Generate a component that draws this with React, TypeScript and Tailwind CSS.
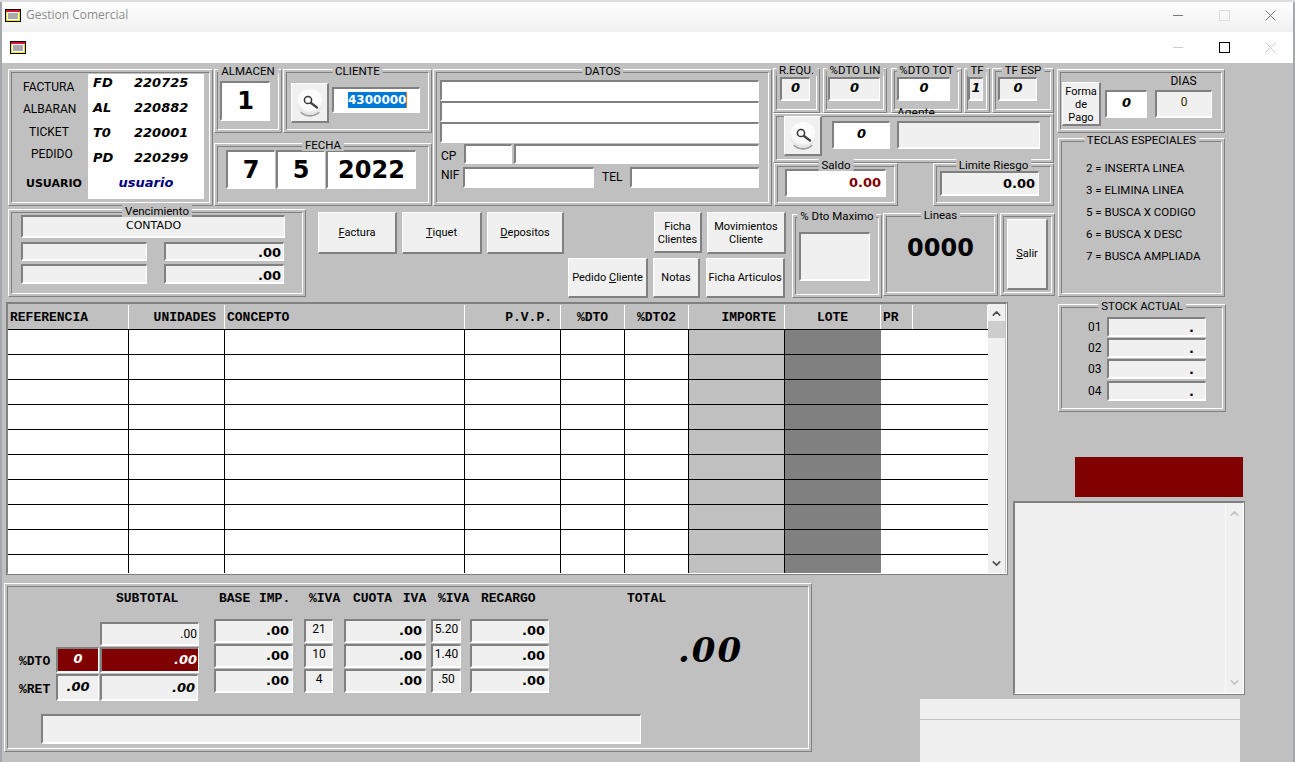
import React from "react";
import { ChevronDown, ChevronUp } from "lucide-react";

const verdana = "font-['DejaVu_Sans',sans-serif]";
const valueBold = `${verdana} font-bold text-[13px]`;
const valueItalic = `${verdana} font-bold italic text-[13px]`;
const bigValue = `${verdana} font-bold text-[24px]`;
const mono = "font-['Liberation_Mono',monospace] font-bold text-[13px] leading-none";

const Group = ({
  title,
  className = "",
  innerClassName = "",
  children,
}: {
  title?: string;
  className?: string;
  innerClassName?: string;
  children?: React.ReactNode;
}) => (
  <div className={`relative shrink-0 border border-t-white border-l-white border-r-[#808080] border-b-[#808080] p-[2px] ${className}`}>
    <div className={`h-full border border-t-[#808080] border-l-[#808080] border-r-white border-b-white ${innerClassName}`}>
      {children}
    </div>
    {title && (
      <span className="absolute top-[-5px] left-1/2 -translate-x-1/2 whitespace-nowrap bg-[#c0c0c0] px-[3px] text-[11.5px] leading-[12px]">
        {title}
      </span>
    )}
  </div>
);

const Field = ({
  className = "",
  children,
}: {
  className?: string;
  children?: React.ReactNode;
}) => (
  <div className={`flex shrink-0 items-center border-t-2 border-l-2 border-r border-b-2 border-t-[#808080] border-l-[#808080] border-r-white border-b-white ${className}`}>
    {children}
  </div>
);

const Button = ({
  className = "",
  children,
}: {
  className?: string;
  children?: React.ReactNode;
}) => (
  <button className={`flex shrink-0 items-center justify-center border border-r-2 border-b-2 border-t-white border-l-white border-r-[#808080] border-b-[#808080] bg-[#f0f0f0] pt-[1px] text-center text-[11px] ${className}`}>
    {children}
  </button>
);

const AppIcon = ({ className = "" }: { className?: string }) => (
  <svg width="16" height="13" viewBox="0 0 16 13" className={className}>
    <rect x="0" y="0" width="16" height="13" fill="#000" />
    <rect x="1" y="1" width="14" height="2" fill="#e01030" />
    <rect x="1" y="3" width="14" height="9" fill="#f0e800" />
    <rect x="2" y="3" width="12" height="8" fill="#fff" />
    <path d="M3 5h10M3 7h10M3 9h10" stroke="#555" strokeWidth="1" />
  </svg>
);

const SearchButton = ({ className = "" }: { className?: string }) => (
  <Button className={className}>
    <svg width="30" height="32" viewBox="0 0 30 32">
      <defs>
        <radialGradient id="knob" cx="50%" cy="35%" r="60%">
          <stop offset="0%" stopColor="#ffffff" />
          <stop offset="75%" stopColor="#fafafa" />
          <stop offset="100%" stopColor="#e2e2e2" />
        </radialGradient>
      </defs>
      <path d="M6 25c4 5 14 5 18 0" stroke="#9a9a9a" strokeWidth="2" fill="none" />
      <circle cx="15" cy="15" r="13" fill="url(#knob)" />
      <circle cx="13" cy="13" r="3.6" fill="#fff" stroke="#333" strokeWidth="1.5" />
      <path d="M16 16l6 4.5" stroke="#444" strokeWidth="2.2" strokeLinecap="round" />
    </svg>
  </Button>
);

const WindowGlyphs = ({ inner }: { inner?: boolean }) => (
  <div className="flex">
    <div className="flex h-[16px] w-[46px] items-center justify-center">
      <div className={`h-px w-[10px] ${inner ? "bg-[#cccccc]" : "bg-[#777777]"}`} />
    </div>
    <div className="flex h-[16px] w-[46px] items-center justify-center">
      <div className={`h-[11px] w-[11px] border ${inner ? "border-black" : "border-[#dddddd]"}`} />
    </div>
    <div className="flex h-[16px] w-[46px] items-center justify-center">
      <svg width="11" height="11" viewBox="0 0 11 11">
        <path d="M0.5 0.5l10 10M10.5 0.5l-10 10" stroke={inner ? "#cccccc" : "#777777"} strokeWidth="1" />
      </svg>
    </div>
  </div>
);

const headers = [
  { text: "REFERENCIA", cls: "w-[121px] pl-[2px]" },
  { text: "UNIDADES", cls: "w-[96px] justify-end pr-[8px]" },
  { text: "CONCEPTO", cls: "w-[240px] pl-[2px]" },
  { text: "P.V.P.", cls: "w-[96px] justify-end pr-[8px]" },
  { text: "%DTO", cls: "w-[64px] justify-center" },
  { text: "%DTO2", cls: "w-[64px] justify-center" },
  { text: "IMPORTE", cls: "w-[96px] justify-end pr-[8px]" },
  { text: "LOTE", cls: "w-[96px] justify-center" },
  { text: "PR", cls: "w-[32px] pl-[2px]" },
  { text: "", cls: "w-[75px]" },
];

const rows = Array.from({ length: 10 }, (_, i) => i);

const Grid = () => (
  <div className="ml-[2px] h-[273px] w-[1002px] border border-[#808080]">
    <div className="flex h-full border border-t-[#808080] border-l-[#808080] border-r-white border-b-white">
      <div className="w-[980px] shrink-0">
        <div className="flex h-[26px] border-b border-b-black bg-[#c0c0c0] pt-[1px]">
          {headers.map((h) => (
            <div key={h.text} className={`flex shrink-0 items-center border-r border-r-white ${mono} ${h.cls}`}>
              {h.text}
            </div>
          ))}
        </div>
        <div className="h-[243px] overflow-hidden">
          {rows.map((r) => (
            <div key={r} className="grid h-[25px] grid-cols-[121px_96px_240px_96px_64px_64px_96px_96px_107px] border-b border-b-black bg-white">
              <div className="border-r border-r-black" />
              <div className="border-r border-r-black" />
              <div className="border-r border-r-black" />
              <div className="border-r border-r-black" />
              <div className="border-r border-r-black" />
              <div className="border-r border-r-black" />
              <div className="border-r border-r-black bg-[#c0c0c0]" />
              <div className="bg-[#808080]" />
              <div />
            </div>
          ))}
        </div>
      </div>
      <div className="flex w-[17px] shrink-0 flex-col items-center bg-[#f0f0f0]">
        <ChevronUp size={13} strokeWidth={3} color="#505050" className="mt-[3px] shrink-0" />
        <div className="mt-[1px] h-[17px] w-full bg-[#cdcdcd]" />
        <ChevronDown size={13} strokeWidth={3} color="#505050" className="mt-auto mb-[3px] shrink-0" />
      </div>
    </div>
  </div>
);

const TotalColumn = ({
  title,
  titleClass,
  width,
  fieldWidth,
  values,
  thin,
}: {
  title: string;
  titleClass: string;
  width: string;
  fieldWidth: string;
  values: string[];
  thin?: boolean;
}) => (
  <div className={`shrink-0 ${width}`}>
    <div className={`h-[12px] whitespace-nowrap ${mono} ${titleClass}`}>{title}</div>
    <div className="mt-[15px] flex flex-col gap-[1px]">
      {values.map((v, i) => (
        <Field
          key={i}
          className={`h-[24px] bg-[#f0f0f0] ${fieldWidth} ${thin ? "justify-center pb-[4px] text-[12px]" : `justify-end pr-[3px] ${valueBold}`}`}
        >
          {v}
        </Field>
      ))}
    </div>
  </div>
);

const Totals = () => (
  <Group className="mt-[8px] h-[169px] w-[808px]">
    <div className="flex h-[127px] pt-[5px]">
      <div className="ml-[11px] w-[37px] shrink-0 pt-[63px]">
        <div className={`${mono} text-[12px]`}>%DTO</div>
        <div className={`mt-[15px] ${mono} text-[12px]`}>%RET</div>
      </div>
      <div className="mt-[55px] w-[44px] shrink-0">
        <Field className={`h-[26px] w-[43px] justify-center bg-[#800000] pb-[3px] text-white ${valueItalic}`}>0</Field>
        <Field className={`mt-[1px] h-[27px] w-[43px] justify-center bg-[#f0f0f0] pb-[2px] ${valueItalic}`}>.00</Field>
      </div>
      <div className="w-[114px] shrink-0">
        <div className={`ml-[16px] h-[12px] ${mono}`}>SUBTOTAL</div>
        <Field className="mt-[18px] h-[24px] w-[99px] justify-end bg-[#f0f0f0] pr-[1px] text-[12px]">.00</Field>
        <Field className={`mt-[1px] h-[26px] w-[99px] justify-end bg-[#800000] pr-[1px] text-white ${valueItalic}`}>.00</Field>
        <Field className={`mt-[1px] h-[27px] w-[98px] justify-end bg-[#f0f0f0] pr-[2px] ${valueItalic}`}>.00</Field>
      </div>
      <TotalColumn title="BASE IMP." titleClass="ml-[5px] [word-spacing:1px]" width="w-[90px]" fieldWidth="w-[79px]" values={[".00", ".00", ".00"]} />
      <TotalColumn title="%IVA" titleClass="ml-[5px]" width="w-[40px]" fieldWidth="w-[29px]" thin values={["21", "10", "4"]} />
      <TotalColumn title="CUOTA IVA" titleClass="ml-[9px] [word-spacing:3px]" width="w-[87px]" fieldWidth="w-[82px]" values={[".00", ".00", ".00"]} />
      <TotalColumn title="%IVA" titleClass="ml-[7px]" width="w-[39px]" fieldWidth="w-[30px]" thin values={["5.20", "1.40", ".50"]} />
      <TotalColumn title="RECARGO" titleClass="ml-[11px]" width="w-[79px]" fieldWidth="w-[79px]" values={[".00", ".00", ".00"]} />
      <div className="ml-[78px] shrink-0">
        <div className={`h-[12px] ${mono}`}>TOTAL</div>
        <div className="mt-[26px] ml-[51px] font-['DejaVu_Serif',serif] text-[34px] leading-[40px] font-bold tracking-[2px] italic">.00</div>
      </div>
    </div>
    <Field className="ml-[33px] h-[30px] w-[600px] bg-[#f0f0f0]" />
  </Group>
);

const Row = ({ label, mt }: { label: string; mt: string }) => (
  <div className={`flex items-center ${mt}`}>
    <span className="ml-[26px] w-[19px] text-[12px]">{label}</span>
    <Field className={`h-[20px] w-[99px] items-end justify-end bg-[#f0f0f0] pr-[11px] leading-[14px] ${valueBold}`}>.</Field>
  </div>
);

const FacturaBox = () => {
  const nums = [
    ["FD", "220725"],
    ["AL", "220882"],
    ["T0", "220001"],
    ["PD", "220299"],
  ];
  return (
    <Group className="h-[137px] w-[205px]" innerClassName="flex">
      <div className="w-[76px] shrink-0 pt-[8px] text-[12px] leading-[12px]">
        <div className="ml-[11px]">FACTURA</div>
        <div className="mt-[10px] ml-[11px]">ALBARAN</div>
        <div className="mt-[11px] ml-[17px]">TICKET</div>
        <div className="mt-[10px] ml-[19px]">PEDIDO</div>
        <div className={`mt-[18px] ml-[14px] text-[11px] font-bold ${verdana}`}>USUARIO</div>
      </div>
      <div className="mt-px flex h-[125px] w-[116px] shrink-0 flex-col gap-[7px] bg-white">
        {nums.map(([a, b]) => (
          <div key={a} className={`flex h-[18px] items-center pl-[5px] ${valueItalic}`}>
            <span className="w-[41px]">{a}</span>
            <span>{b}</span>
          </div>
        ))}
        <div className={`flex h-[18px] items-center justify-center text-[#000080] ${valueItalic}`}>usuario</div>
      </div>
    </Group>
  );
};

const MiddleBoxes = () => (
  <div className="ml-px w-[218px] shrink-0">
    <div className="flex">
      <Group title="ALMACEN" className="h-[64px] w-[68px]">
        <Field className={`mt-[8px] ml-[2px] h-[40px] w-[50px] justify-center bg-white ${bigValue}`}>1</Field>
      </Group>
      <Group title="CLIENTE" className="ml-px h-[64px] w-[149px]" innerClassName="flex items-start">
        <SearchButton className="mt-[10px] ml-[4px] h-[40px] w-[38px]" />
        <Field className="mt-[14px] ml-[3px] h-[26px] w-[88px] bg-white pl-[14px]">
          <span className={`h-[16px] border-r border-r-[#e07020] bg-[#0078d7] text-[12px] leading-[16px] font-bold text-white ${verdana}`}>4300000</span>
        </Field>
      </Group>
    </div>
    <Group title="FECHA" className="mt-[10px] h-[63px] w-[218px]" innerClassName="flex items-start gap-px pt-[3px] pl-[8px]">
      <Field className={`h-[39px] w-[49px] justify-center bg-white ${bigValue}`}>7</Field>
      <Field className={`h-[39px] w-[49px] justify-center bg-white ${bigValue}`}>5</Field>
      <Field className={`h-[39px] w-[90px] justify-center bg-white ${bigValue}`}>2022</Field>
    </Group>
  </div>
);

const DatosBox = () => (
  <Group title="DATOS" className="ml-px h-[137px] w-[339px]" innerClassName="pt-[7px] pl-[3px] text-[12px]">
    <Field className="h-[21px] w-[319px] bg-white" />
    <Field className="h-[21px] w-[319px] bg-white" />
    <Field className="h-[21px] w-[319px] bg-white" />
    <div className="flex items-center">
      <span className="ml-[1px] w-[23px] pt-[4px]">CP</span>
      <Field className="h-[20px] w-[48px] bg-white" />
      <Field className="ml-[2px] h-[20px] w-[245px] bg-white" />
    </div>
    <div className="mt-[1px] flex items-center">
      <span className="ml-[1px] w-[22px] pb-[5px]">NIF</span>
      <Field className="h-[21px] w-[131px] bg-white" />
      <span className="ml-[8px] w-[28px] pb-[2px]">TEL</span>
      <Field className="h-[21px] w-[129px] bg-white" />
    </div>
  </Group>
);

const smallValue = `justify-center pb-[2px] ${valueItalic}`;

const RightBoxes = () => (
  <div className="-mt-px ml-px w-[282px] shrink-0">
    <div className="flex h-[45px]">
      <Group title="R.EQU." className="h-[45px] w-[47px]">
        <Field className={`mt-[5px] ml-[3px] h-[24px] w-[30px] bg-[#f0f0f0] ${smallValue}`}>0</Field>
      </Group>
      <Group title="%DTO LIN" className="ml-[3px] h-[45px] w-[64px]">
        <Field className={`mt-[5px] ml-[1px] h-[24px] w-[52px] bg-[#f0f0f0] ${smallValue}`}>0</Field>
      </Group>
      <Group title="%DTO TOT" className="ml-[4px] h-[45px] w-[71px]">
        <Field className={`mt-[5px] ml-[2px] h-[24px] w-[53px] bg-white ${smallValue}`}>0</Field>
      </Group>
      <Group title="TF" className="ml-[2px] h-[45px] w-[26px]">
        <Field className={`mt-[5px] h-[24px] w-[15px] bg-[#f0f0f0] ${smallValue}`}>1</Field>
      </Group>
      <Group title="TF ESP" className="ml-[2px] h-[45px] w-[62px]">
        <Field className={`mt-[5px] ml-[2px] h-[24px] w-[39px] bg-[#f0f0f0] ${smallValue}`}>0</Field>
      </Group>
    </div>
    <Group className="h-[50px] w-[281px]" innerClassName="flex items-start">
      <SearchButton className="-mt-[1px] ml-[7px] h-[40px] w-[38px]" />
      <Field className={`mt-[4px] ml-[10px] h-[28px] w-[58px] bg-white ${smallValue}`}>0</Field>
      <Field className="mt-[4px] ml-[7px] h-[28px] w-[143px] bg-[#f0f0f0]" />
      <div className="absolute top-[-7px] left-[123px] h-[7px] overflow-hidden text-[12px] leading-[13px]">Agente</div>
    </Group>
    <div className="flex">
      <Group title="Saldo" className="ml-px h-[43px] w-[124px]">
        <Field className={`mt-[2px] ml-[7px] h-[28px] w-[101px] justify-end bg-white pr-[4px] text-[#800000] ${valueBold}`}>0.00</Field>
      </Group>
      <Group title="Limite Riesgo" className="ml-[35px] h-[43px] w-[121px]">
        <Field className={`mt-[4px] ml-[3px] h-[25px] w-[99px] justify-end bg-[#f0f0f0] pr-[3px] ${valueBold}`}>0.00</Field>
      </Group>
    </div>
  </div>
);

const ActionButtons = () => (
  <div className="ml-[12px] w-[468px] shrink-0 pt-[3px]">
    <div className="flex">
      <Button className="h-[42px] w-[79px]"><span><u>F</u>actura</span></Button>
      <Button className="ml-[5px] h-[42px] w-[80px]"><span><u>T</u>iquet</span></Button>
      <Button className="ml-[5px] h-[42px] w-[77px]"><span><u>D</u>epositos</span></Button>
      <Button className="ml-[90px] h-[41px] w-[48px] leading-[13px]">Ficha Clientes</Button>
      <Button className="ml-[5px] h-[42px] w-[79px] leading-[13px]">Movimientos Cliente</Button>
    </div>
    <div className="mt-[4px] flex">
      <Button className="ml-[250px] h-[40px] w-[80px] whitespace-nowrap"><span>Pedido <u>C</u>liente</span></Button>
      <Button className="ml-[5px] h-[40px] w-[47px]">Notas</Button>
      <Button className="ml-[6px] h-[40px] w-[79px] whitespace-nowrap">Ficha Articulos</Button>
    </div>
  </div>
);

const UpperLeft = () => (
  <div className="w-[1047px] shrink-0">
    <div className="flex h-[137px] items-start">
      <FacturaBox />
      <MiddleBoxes />
      <DatosBox />
      <RightBoxes />
    </div>
    <div className="mt-[3px] flex items-start">
      <Group title="Vencimiento" className="h-[88px] w-[298px]" innerClassName="pl-[9px] pt-[2px]">
        <Field className={`h-[23px] w-[264px] justify-center bg-[#f0f0f0] text-[11px] ${verdana}`}>CONTADO</Field>
        <div className="mt-[4px] flex">
          <Field className="h-[19px] w-[126px] bg-[#f0f0f0]" />
          <Field className={`ml-[17px] h-[19px] w-[120px] justify-end bg-[#f0f0f0] pt-[2px] pr-[2px] ${valueBold}`}>.00</Field>
        </div>
        <div className="mt-[3px] flex">
          <Field className="h-[20px] w-[126px] bg-[#f0f0f0]" />
          <Field className={`ml-[17px] h-[20px] w-[120px] justify-end bg-[#f0f0f0] pt-[3px] pr-[2px] ${valueBold}`}>.00</Field>
        </div>
      </Group>
      <ActionButtons />
      <Group title="% Dto Maximo" className="mt-[5px] ml-[6px] h-[84px] w-[90px]">
        <Field className="mt-[14px] ml-[3px] h-[49px] w-[71px] bg-[#f0f0f0]" />
      </Group>
      <Group title="Lineas" className="mt-[4px] ml-px h-[83px] w-[115px]" innerClassName="flex justify-center pt-[17px]">
        <span className={`${bigValue} leading-[28px]`}>0000</span>
      </Group>
      <Group className="mt-[4px] ml-[2px] h-[83px] w-[55px]">
        <Button className="mt-[2px] ml-[3px] h-[71px] w-[41px]"><span><u>S</u>alir</span></Button>
      </Group>
    </div>
  </div>
);

const UpperRight = () => (
  <div className="ml-[2px] w-[170px] shrink-0">
    <Group className="h-[64px] w-[168px]" innerClassName="flex items-start">
      <Button className="mt-[9px] ml-[1px] h-[44px] w-[39px] leading-[13px]">Forma de Pago</Button>
      <Field className={`mt-[17px] ml-[4px] h-[28px] w-[42px] bg-white ${smallValue}`}>0</Field>
      <div className="ml-[8px] flex w-[57px] flex-col items-center pt-[2px] text-[12px] leading-[12px]">
        <span>DIAS</span>
        <Field className="mt-[3px] h-[28px] w-[57px] justify-center bg-[#f0f0f0] pb-[5px] text-[#3a2a00]">0</Field>
      </div>
    </Group>
    <Group title="TECLAS ESPECIALES" className="mt-[5px] ml-px h-[159px] w-[167px]" innerClassName="pt-[15px] pl-[24px] text-[11.5px] leading-[22px]">
      <div>2 = INSERTA LINEA</div>
      <div>3 = ELIMINA LINEA</div>
      <div>5 = BUSCA X CODIGO</div>
      <div>6 = BUSCA X DESC</div>
      <div>7 = BUSCA AMPLIADA</div>
    </Group>
  </div>
);

const LowerRight = () => (
  <div className="flex w-[232px] shrink-0 flex-col items-start">
    <Group title="STOCK ACTUAL" className="ml-[45px] h-[108px] w-[168px]" innerClassName="pt-[9px]">
      <Row label="01" mt="" />
      <Row label="02" mt="mt-px" />
      <Row label="03" mt="mt-px" />
      <Row label="04" mt="mt-[2px]" />
    </Group>
    <div className="mt-[45px] ml-[62px] h-[40px] w-[168px] bg-[#800000]" />
    <div className="mt-[4px] h-[194px] w-[232px] border border-[#808080]">
      <div className="flex h-full border border-t-[#808080] border-l-[#808080] border-r-white border-b-white bg-[#f0f0f0]">
        <div className="flex-1 border-r border-r-[#f8f8f8]" />
        <div className="flex w-[17px] flex-col items-center">
          <ChevronUp size={13} strokeWidth={3} color="#c4c4c4" className="mt-[4px]" />
          <ChevronDown size={13} strokeWidth={3} color="#c4c4c4" className="mt-auto mb-[4px]" />
        </div>
      </div>
    </div>
    <div className="mt-[4px] -ml-[93px] h-[63px] w-[320px] shrink-0 bg-[#f0f0f0]">
      <div className="h-[21px] border-b border-b-[#c0c0c0]" />
    </div>
  </div>
);

export default function App() {
  return (
    <div className="h-[762px] w-[1295px] overflow-hidden border-t-2 border-t-[#dcdcdc] bg-[#a4a8ac] pl-[2px] font-['Roboto',sans-serif] text-black">
      <div className="w-[1291px]">
        <div className="flex h-[30px] items-center justify-between bg-gradient-to-b from-white to-[#f0f0f0] pb-[4px] pl-[3px]">
          <div className="flex items-center">
            <AppIcon />
            <span className="ml-[5px] font-['Open_Sans',sans-serif] text-[12px] text-[#8c8c8c]">Gestion Comercial</span>
          </div>
          <WindowGlyphs />
        </div>
        <div className="flex h-[31px] items-center justify-between bg-white pl-[8px]">
          <AppIcon />
          <WindowGlyphs inner />
        </div>
        <div className="h-[699px] overflow-hidden bg-[#c0c0c0]">
          <div className="flex h-[241px] pt-[6px] pl-[6px]">
            <UpperLeft />
            <UpperRight />
          </div>
          <div className="flex">
            <div className="-mt-[2px] ml-[2px] w-[1009px] shrink-0">
              <Grid />
              <Totals />
            </div>
            <LowerRight />
          </div>
        </div>
      </div>
    </div>
  );
}
